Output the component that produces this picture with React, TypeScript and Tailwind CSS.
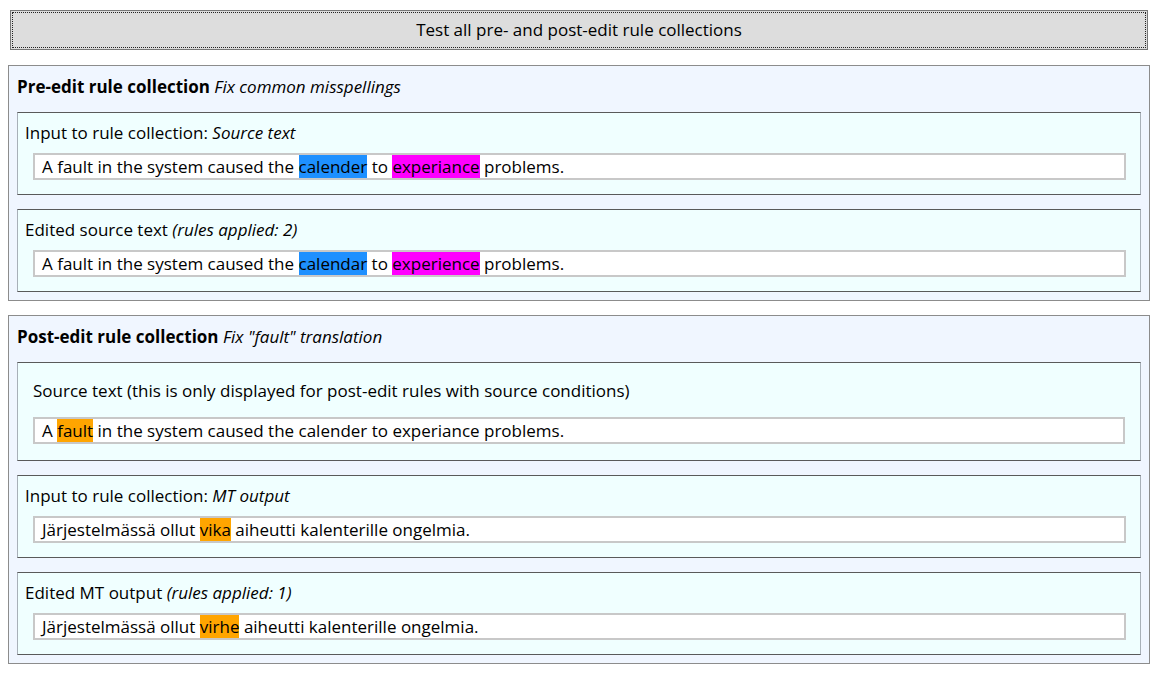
import React from "react";

type Part = { text: string; hl?: string };

function Field({ parts, indent }: { parts: Part[]; indent?: boolean }) {
  return (
    <div
      className={`h-[27px] border-2 border-[#c8c8c8] bg-white pl-[7px] text-[17px] leading-[23px] text-black whitespace-pre ${
        indent ? "ml-[8px] mr-[7px]" : ""
      }`}
    >
      {parts.map((p, i) =>
        p.hl ? (
          <span key={i} className={`${p.hl} inline-block leading-[23px]`}>
            {p.text}
          </span>
        ) : (
          <span key={i}>{p.text}</span>
        )
      )}
    </div>
  );
}

function Box({ children, roomy }: { children: React.ReactNode; roomy?: boolean }) {
  return (
    <div
      className={`border border-t-[#5a5a5a] border-b-[#5a5a5a] border-l-[#a8b0b8] border-r-[#a8b0b8] bg-[#f0ffff] ${
        roomy ? "px-[15px] pt-[17px] pb-[16px]" : "px-[7px] pt-[9px] pb-[14px]"
      }`}
    >
      {children}
    </div>
  );
}

function Label({ children, roomy }: { children: React.ReactNode; roomy?: boolean }) {
  return (
    <div className={`text-[17px] leading-[22px] ${roomy ? "mb-[15px]" : "mb-[9px]"}`}>{children}</div>
  );
}

function Section({ title, note, children }: { title: string; note: string; children: React.ReactNode }) {
  return (
    <section className="border border-[#8c8c8c] bg-[#f0f6ff] px-[8px] pt-[10px] pb-[8px]">
      <div className="text-[17px] leading-[22px] mb-[14px]">
        <b className="font-bold">{title}</b> <i>{note}</i>
      </div>
      <div className="flex flex-col gap-[14px]">{children}</div>
    </section>
  );
}

const blue = "bg-[#1e90ff]";
const pink = "bg-[#ff00ff]";
const orange = "bg-[#ffa500]";

export default function App() {
  return (
    <div className="min-h-screen bg-white p-[8px] text-black font-['Open_Sans',sans-serif]">
      <button className="mx-[2px] mt-[2px] w-[calc(100%-4px)] h-[40px] border border-[#767676] bg-[#dddddd] p-[2px] text-[17px]">
        <div className="h-full flex items-center justify-center outline-1 outline-dotted outline-[#222]">
          Test all pre- and post-edit rule collections
        </div>
      </button>

      <div className="mt-[15px] flex flex-col gap-[14px]">
        <Section title="Pre-edit rule collection" note="Fix common misspellings">
          <Box>
            <Label>
              Input to rule collection: <i>Source text</i>
            </Label>
            <Field
              indent
              parts={[
                { text: "A fault in the system caused the " },
                { text: "calender", hl: blue },
                { text: " to " },
                { text: "experiance", hl: pink },
                { text: " problems." },
              ]}
            />
          </Box>
          <Box>
            <Label>
              Edited source text <i>(rules applied: 2)</i>
            </Label>
            <Field
              indent
              parts={[
                { text: "A fault in the system caused the " },
                { text: "calendar", hl: blue },
                { text: " to " },
                { text: "experience", hl: pink },
                { text: " problems." },
              ]}
            />
          </Box>
        </Section>

        <Section title="Post-edit rule collection" note={'Fix "fault" translation'}>
          <Box roomy>
            <Label roomy>Source text (this is only displayed for post-edit rules with source conditions)</Label>
            <Field
              parts={[
                { text: "A " },
                { text: "fault", hl: orange },
                { text: " in the system caused the calender to experiance problems." },
              ]}
            />
          </Box>
          <Box>
            <Label>
              Input to rule collection: <i>MT output</i>
            </Label>
            <Field
              indent
              parts={[
                { text: "Järjestelmässä ollut " },
                { text: "vika", hl: orange },
                { text: " aiheutti kalenterille ongelmia." },
              ]}
            />
          </Box>
          <Box>
            <Label>
              Edited MT output <i>(rules applied: 1)</i>
            </Label>
            <Field
              indent
              parts={[
                { text: "Järjestelmässä ollut " },
                { text: "virhe", hl: orange },
                { text: " aiheutti kalenterille ongelmia." },
              ]}
            />
          </Box>
        </Section>
      </div>
    </div>
  );
}
